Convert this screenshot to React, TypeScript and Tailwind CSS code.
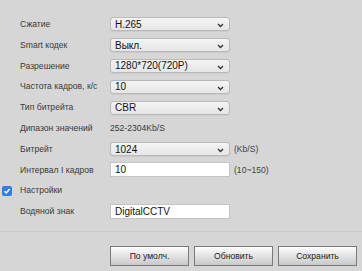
import React from "react";

const font = { fontFamily: '"Liberation Sans", Arial, sans-serif' };

function Chevron() {
  return (
    <svg width="7" height="5" viewBox="0 0 7 5" className="absolute right-[5px] top-[5px]">
      <path d="M1 1 L3.5 3.5 L6 1" fill="none" stroke="#333" strokeWidth="1.3" />
    </svg>
  );
}

function Select({ value }: { value: string }) {
  return (
    <div className="relative shrink-0 w-[120px] h-[14px] rounded-[3px] border border-[#b9b9b9] bg-gradient-to-b from-[#f4f4f4] to-[#e6e6e6] shadow-[0_1px_0_rgba(0,0,0,0.05)] flex items-center pl-[4px] text-[10px] text-[#111]">
      {value}
      <Chevron />
    </div>
  );
}

function Input({ value }: { value: string }) {
  return (
    <div className="shrink-0 w-[120px] h-[15px] border border-[#c4c4c4] bg-white flex items-center pl-[4px] text-[10px] text-[#111]">
      {value}
    </div>
  );
}

function Row({ label, children, extra }: { label: string; children: React.ReactNode; extra?: string }) {
  return (
    <div className="h-[20.8px] flex items-center">
      <div className="shrink-0 w-[110px] pl-[20px] text-[8.6px] text-[#3a3a3a] whitespace-nowrap">{label}</div>
      {children}
      {extra && <div className="ml-[4px] text-[8.6px] text-[#444]">{extra}</div>}
    </div>
  );
}

function Btn({ label }: { label: string }) {
  return (
    <div className="w-[79px] h-[20px] border border-[#7a7a7a] bg-gradient-to-b from-[#fdfdfd] to-[#c9c9c9] flex items-center justify-center text-[8.6px] text-[#222] shadow-[inset_0_1px_0_#fff]">
      {label}
    </div>
  );
}

export default function App() {
  return (
    <div style={font} className="w-[362px] h-[271px] bg-[#d6d6d6] flex flex-col overflow-hidden">
      <div className="pt-[14px] flex flex-col">
        <Row label="Сжатие"><Select value="H.265" /></Row>
        <Row label="Smart кодек"><Select value="Выкл." /></Row>
        <Row label="Разрешение"><Select value="1280*720(720P)" /></Row>
        <Row label="Частота кадров, к/с"><Select value="10" /></Row>
        <Row label="Тип битрейта"><Select value="CBR" /></Row>
        <Row label="Дипазон значений"><div className="text-[8.6px] text-[#3a3a3a]">252-2304Kb/S</div></Row>
        <Row label="Битрейт" extra="(Kb/S)"><Select value="1024" /></Row>
        <Row label="Интервал I кадров" extra="(10~150)"><Input value="10" /></Row>
        <div className="h-[20.8px] flex items-center">
          <div className="ml-[2px] w-[10px] h-[10px] rounded-[2px] bg-[#2f7fe0] flex items-center justify-center">
            <svg width="8" height="8" viewBox="0 0 8 8">
              <path d="M1.5 4.2 L3.3 6 L6.6 2" fill="none" stroke="#fff" strokeWidth="1.5" />
            </svg>
          </div>
          <div className="ml-[8px] text-[8.6px] text-[#3a3a3a]">Настройки</div>
        </div>
        <Row label="Водяной знак"><Input value="DigitalCCTV" /></Row>
      </div>
      <div className="mt-[9px] border-t border-[#c9c9c9] shadow-[0_-3px_4px_rgba(255,255,255,0.25)]" />
      <div className="pt-[14px] pl-[110px] flex gap-[5px]">
        <Btn label="По умолч." />
        <Btn label="Обновить" />
        <Btn label="Сохранить" />
      </div>
    </div>
  );
}
